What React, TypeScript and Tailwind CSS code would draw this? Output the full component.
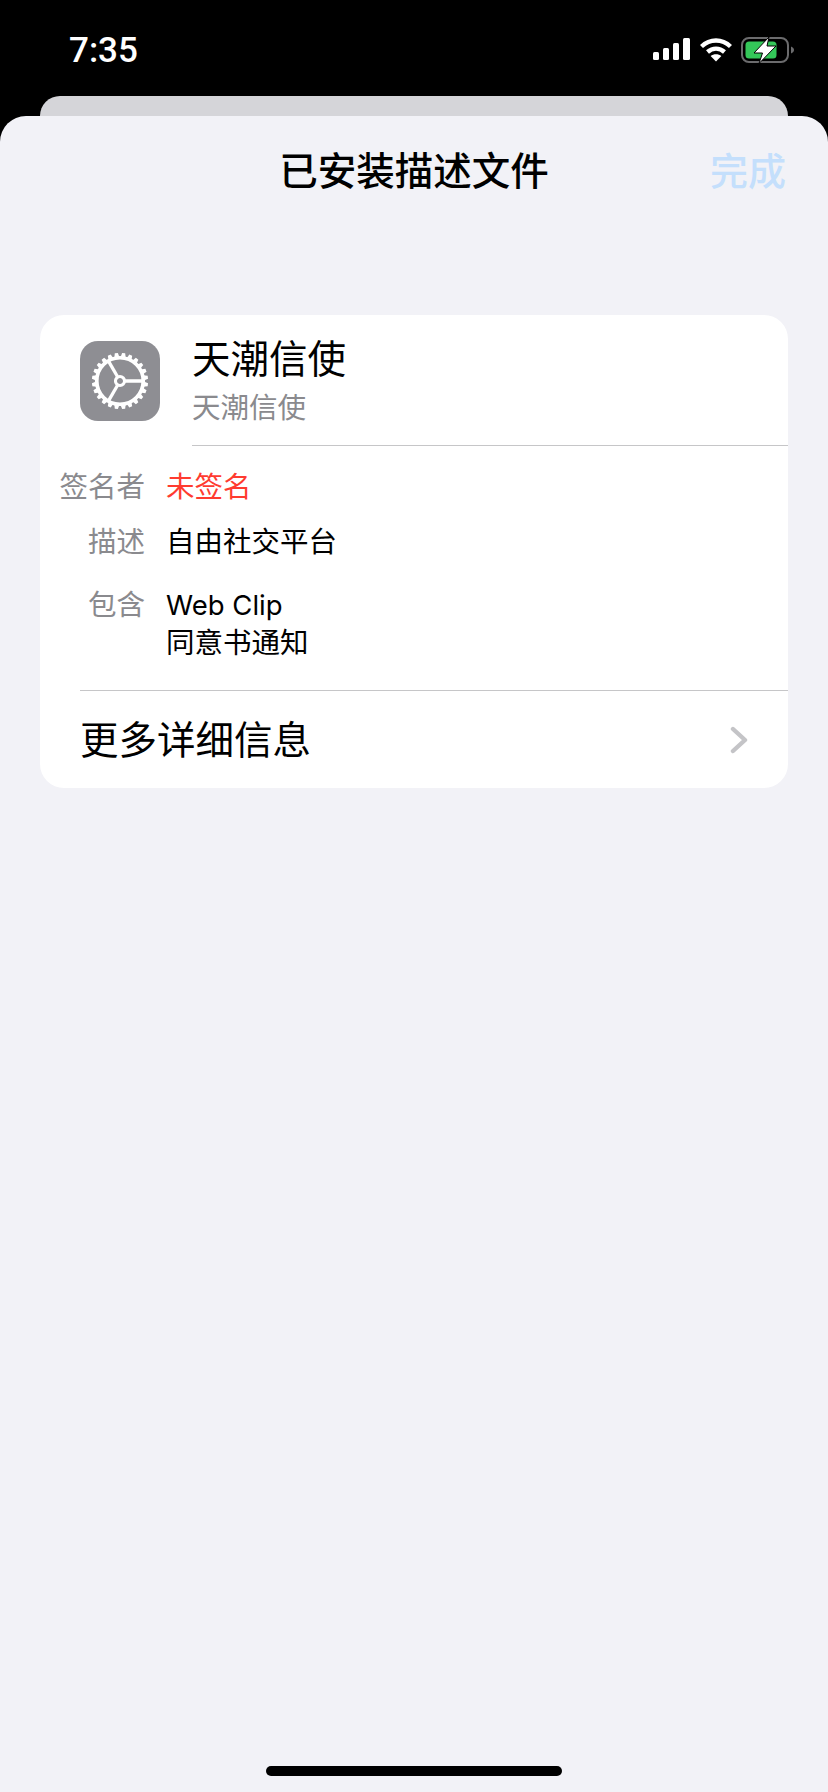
import React from "react";

const font = "font-['Inter','Noto_Sans_CJK_SC',sans-serif]";

function StatusIcons() {
  return (
    <div className="flex items-start">
      <svg width="37" height="24" viewBox="0 0 37 24" fill="#fff">
        <rect x="0" y="14" width="6" height="8" rx="1.5" />
        <rect x="10" y="10" width="6" height="12" rx="1.5" />
        <rect x="20" y="5" width="6" height="17" rx="1.5" />
        <rect x="30" y="0" width="7" height="22" rx="1.5" />
      </svg>
      <svg className="ml-[10px]" width="32" height="24" viewBox="0 0 32 24" fill="none" stroke="#fff" strokeWidth="4.4">
        <path d="M1.5 8.5C10 0.5 22 0.5 30.5 8.5" />
        <path d="M7.5 14C12.5 9.5 19.5 9.5 24.5 14" />
        <path d="M16 23.5L10.6 18C13.6 15.6 18.4 15.6 21.4 18Z" fill="#fff" stroke="none" />
      </svg>
      <svg className="ml-[9px] -mt-[1px]" width="53" height="26" viewBox="0 0 53 26">
        <rect x="1" y="1" width="46" height="24" rx="7" fill="none" stroke="#6b6b6d" strokeWidth="2" />
        <rect x="4.5" y="4.5" width="31" height="17" rx="3.5" fill="#34c759" />
        <path d="M50 9.5C52 10.5 53 11.5 53 13S52 15.5 50 16.5Z" fill="#6b6b6d" />
        <path d="M28 0L13 16H21.5L18 26.5L35 9H26Z" fill="#fff" stroke="#000" strokeWidth="1" strokeLinejoin="round" />
      </svg>
    </div>
  );
}

function GearIcon() {
  const spokes = [0, 120, 240];
  const teeth = Array.from({ length: 24 }, (_, i) => (i * 360) / 24);
  return (
    <div className="w-20 h-20 rounded-[18px] bg-[#8e8e93] flex items-center justify-center shrink-0">
      <svg width="62" height="62" viewBox="-30 -30 60 60" fill="none" stroke="#fff">
        <circle r="22.5" strokeWidth="3.6" />
        <circle r="4.4" strokeWidth="3" />
        {teeth.map((a) => (
          <path key={a} d="M-2.6 -22.5L-1.5 -27.2H1.5L2.6 -22.5Z" fill="#fff" stroke="none" transform={`rotate(${a + 7.5})`} />
        ))}
        {spokes.map((a) => (
          <line key={a} x1="5" y1="0" x2="22" y2="0" strokeWidth="3.2" transform={`rotate(${a})`} />
        ))}
      </svg>
    </div>
  );
}

function Row({ label, className, children }: { label: string; className?: string; children: React.ReactNode }) {
  return (
    <div className={`flex items-start ${className ?? ""}`}>
      <div className="w-[105px] shrink-0 text-right text-[28.5px] leading-[38px] text-[#8a8a8e] whitespace-nowrap">{label}</div>
      <div className="ml-[21px] text-[28.5px] leading-[38px] text-black">{children}</div>
    </div>
  );
}

export default function App() {
  return (
    <div className={`w-[828px] h-[1792px] bg-black flex flex-col overflow-hidden ${font}`}>
      <div className="h-[96px] shrink-0 flex items-start justify-between pl-[69px] pr-[34px] pt-[30px]">
        <span className="text-white text-[35px] leading-[41px] font-medium font-['Roboto',sans-serif]">7:35</span>
        <div className="pt-[8px]"><StatusIcons /></div>
      </div>
      <div className="h-[20px] shrink-0 mx-[40px] bg-[#d5d5d9] rounded-t-[20px]" />
      <div className="flex-1 bg-[#f2f2f7] rounded-t-[26px] flex flex-col">
        <div className="relative h-[110px] shrink-0 flex items-center justify-center">
          <span className="text-[38.5px] leading-[48px] font-medium text-black">已安装描述文件</span>
          <span className="absolute right-[42px] top-[31px] text-[38px] leading-[48px] font-medium text-[#c4dffc]">完成</span>
        </div>
        <div className="mt-[89px] mx-[40px] bg-white rounded-[24px] overflow-hidden">
          <div className="flex pl-[40px] pt-[26px]">
            <GearIcon />
            <div className="ml-[32px] flex-1 border-b border-[#c6c6c8] h-[105px]">
              <div className="text-[38.5px] leading-[46px] text-black -mt-[5px]">天潮信使</div>
              <div className="text-[28.5px] leading-[38px] text-[#8a8a8e] mt-[7px]">天潮信使</div>
            </div>
          </div>
          <Row label="签名者" className="mt-[22px]"><span className="text-[#ff3b30]">未签名</span></Row>
          <Row label="描述" className="mt-[17px]">自由社交平台</Row>
          <Row label="包含" className="mt-[25px]">
            <div className="text-[27.5px]">Web Clip</div>
            <div>同意书通知</div>
          </Row>
          <div className="ml-[40px] mt-[28px] border-t border-[#c6c6c8] h-[98px] flex items-center justify-between pr-[40px]">
            <span className="text-[38.5px] leading-[48px] text-black">更多详细信息</span>
            <svg width="18" height="28" viewBox="0 0 18 28" fill="none" stroke="#c4c4c7" strokeWidth="4.4" strokeLinecap="round" strokeLinejoin="round">
              <path d="M3 3L15 14L3 25" />
            </svg>
          </div>
        </div>
        <div className="mt-auto mb-[16px] mx-auto w-[296px] h-[10px] rounded-full bg-black" />
      </div>
    </div>
  );
}
